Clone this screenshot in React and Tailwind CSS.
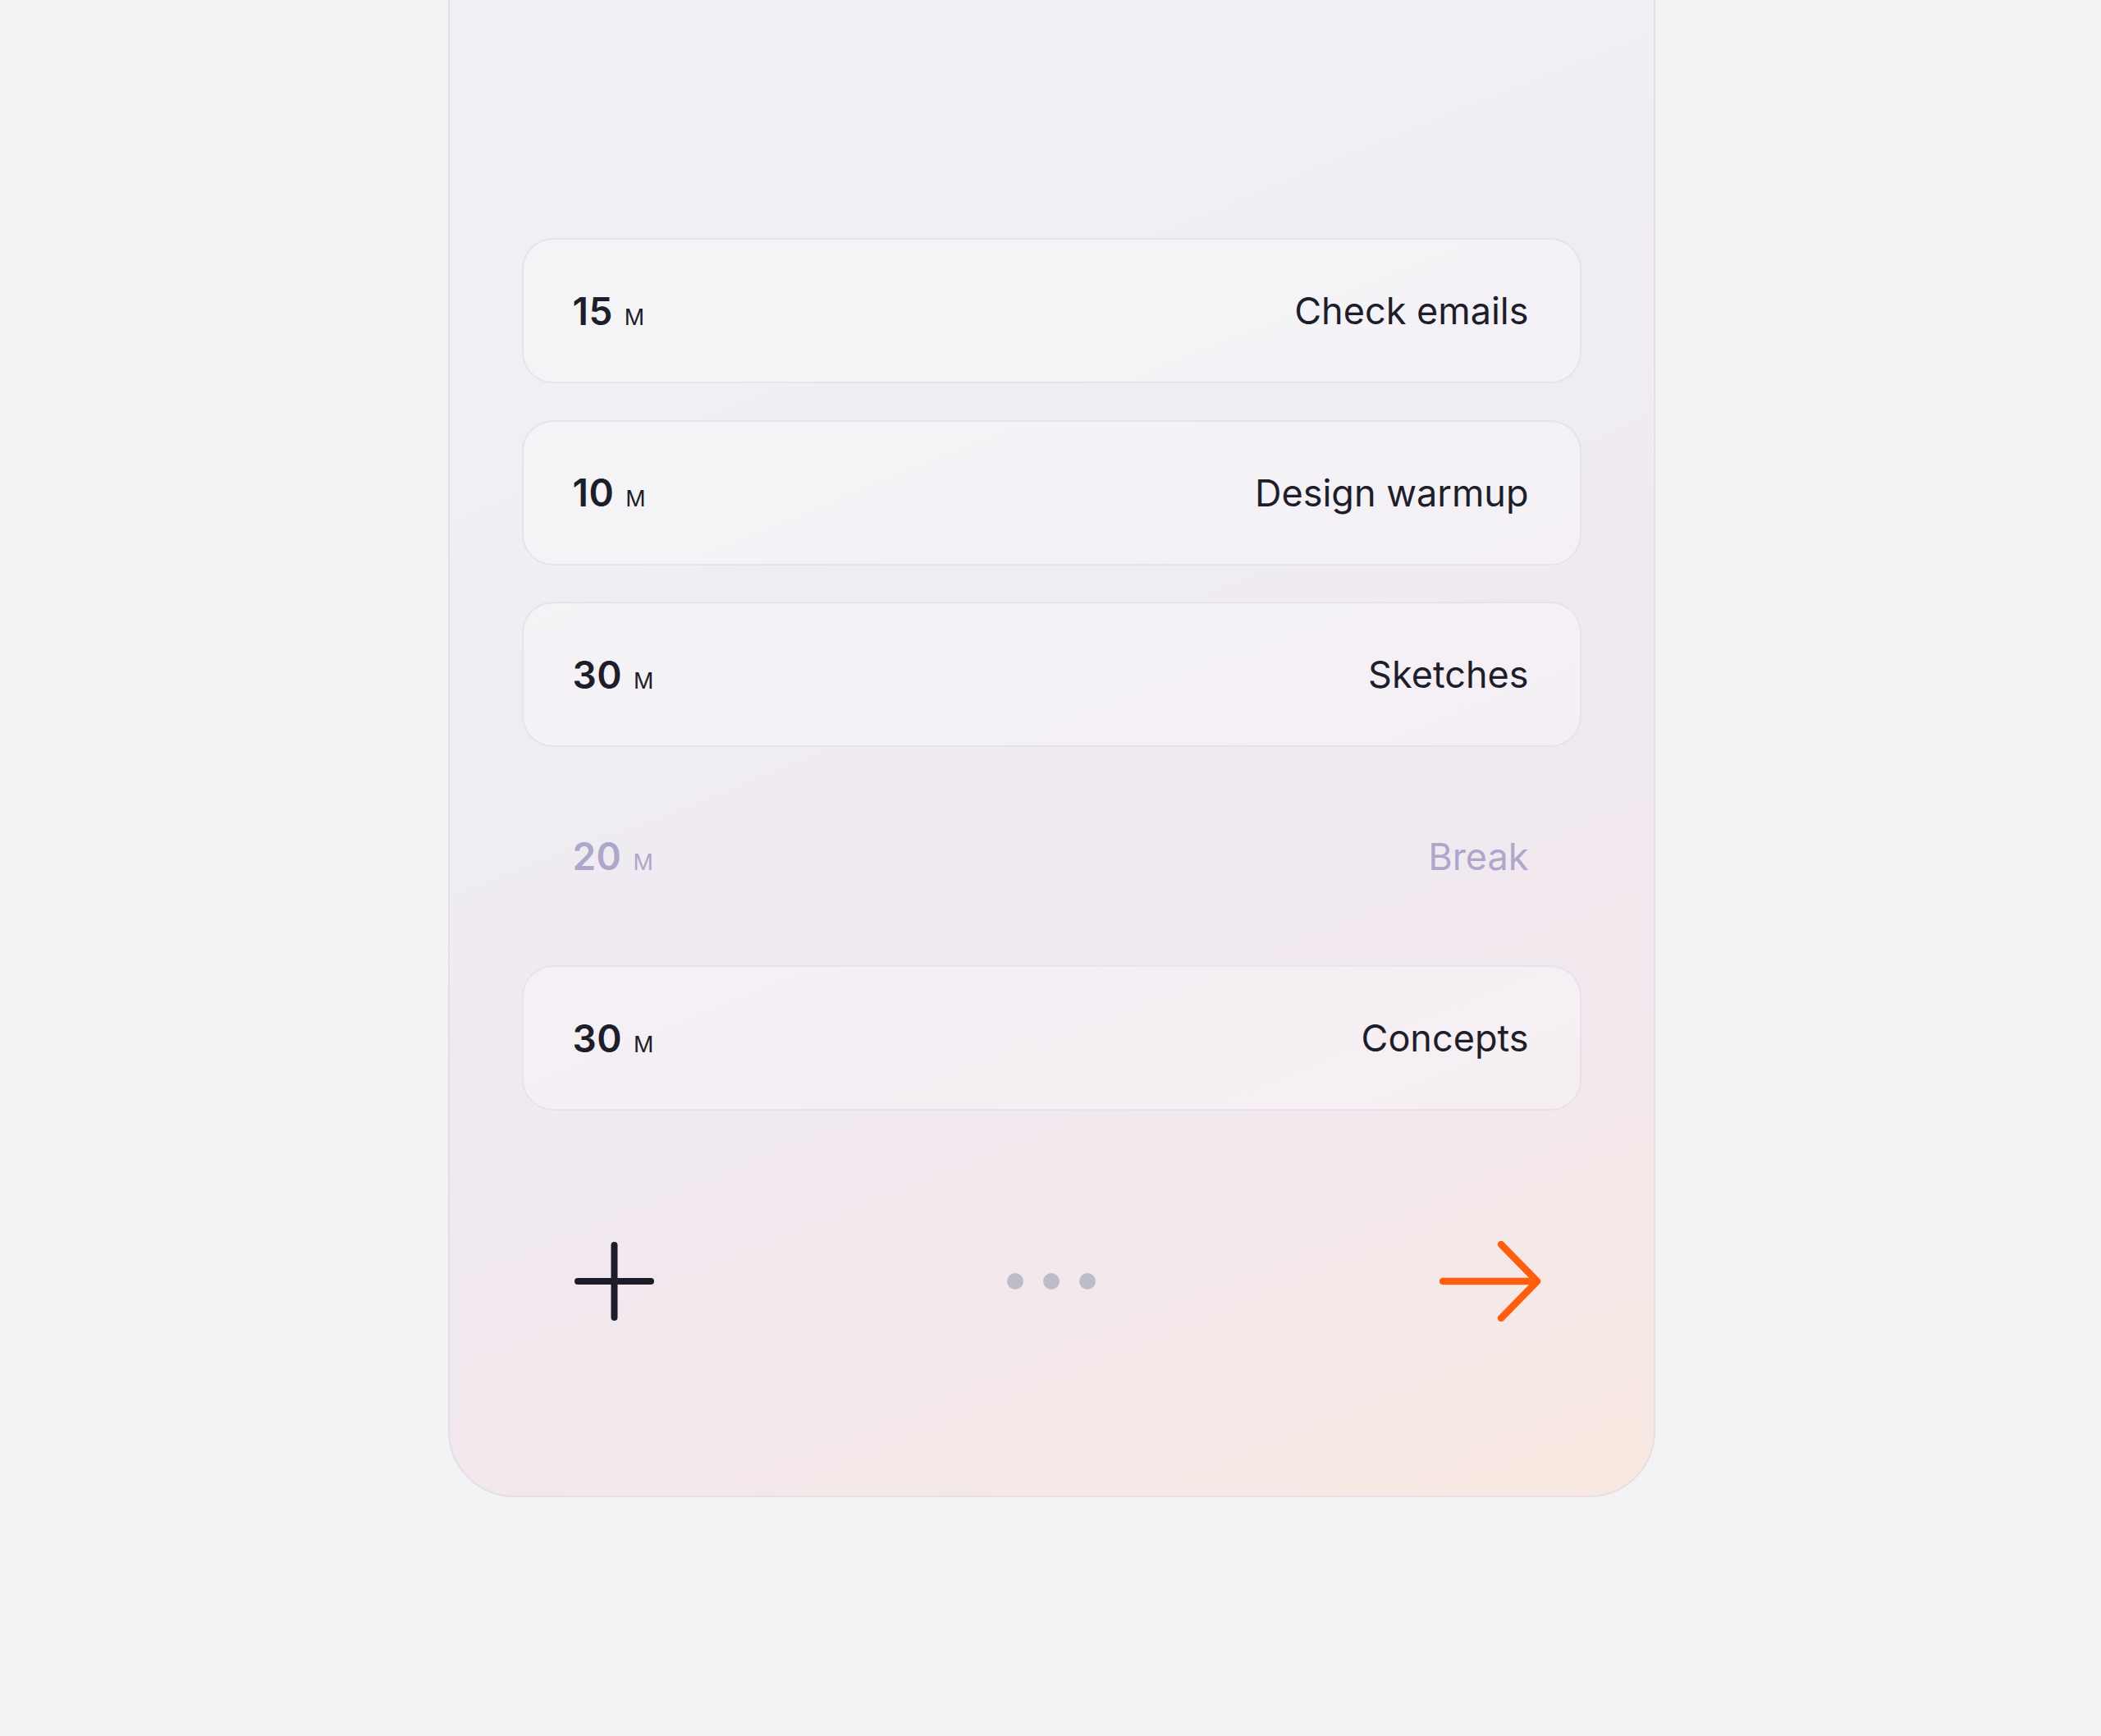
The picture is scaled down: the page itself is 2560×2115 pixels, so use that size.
import React from "react";

const rows = [
  { n: "15", label: "Check emails" },
  { n: "10", label: "Design warmup" },
  { n: "30", label: "Sketches" },
  { n: "20", label: "Break", muted: true },
  { n: "30", label: "Concepts" },
];

function Row({ n, label, muted }) {
  return (
    <div
      className={
        "flex h-[177px] items-center justify-between rounded-[38px] pl-[60px] pr-[62px] " +
        (muted ? "border-2 border-transparent" : "border-2 border-[#e5e3eb] bg-white/30")
      }
    >
      <div className={"flex items-baseline gap-[14px] " + (muted ? "text-[#aea7cb]" : "text-[#1e1e2a]")}>
        <span className="text-[46px] font-semibold leading-none tracking-[0.01em]">{n}</span>
        <span className="text-[27px] font-normal leading-none">M</span>
      </div>
      <span className={"text-[45px] font-normal leading-none " + (muted ? "text-[#aea7cb]" : "text-[#1e1e2a]")}>
        {label}
      </span>
    </div>
  );
}

export default function App() {
  return (
    <div
      className="min-h-[2115px] w-full overflow-hidden bg-[#f3f3f5]"
      style={{ fontFamily: "Inter, 'Noto Sans', sans-serif" }}
    >
      <div className="mx-auto -mt-[120px] w-[1471px] translate-x-[1px] rounded-[80px] border-2 border-[#e3dfe4] bg-[linear-gradient(158deg,#f0f1f4_0%,#eff0f4_25%,#efeaf1_55%,#f2e8ee_75%,#f8e8e0_100%)] px-[88px] pt-[408px] pb-[212px]">
        <div className="flex flex-col gap-[44.5px]">
          {rows.map((r, i) => (
            <Row key={i} {...r} />
          ))}
        </div>
        <div className="mt-[159px] grid grid-cols-[1fr_auto_1fr] items-center">
          <div className="ml-[64px] flex justify-start">
            <svg width="97" height="96" viewBox="0 0 97 96" fill="none">
              <path d="M48.5 4V92M4 48H93" stroke="#1d1d29" strokeWidth="8" strokeLinecap="round" />
            </svg>
          </div>
          <div className="flex items-center gap-[24px]">
            <span className="block h-[20px] w-[20px] rounded-full bg-[#bdbdc9]" />
            <span className="block h-[20px] w-[20px] rounded-full bg-[#bdbdc9]" />
            <span className="block h-[20px] w-[20px] rounded-full bg-[#bdbdc9]" />
          </div>
          <div className="mr-[49px] flex justify-end">
            <svg width="124" height="98" viewBox="0 0 124 98" fill="none">
              <path
                d="M4 49H118M75 4L119 49L75 94"
                stroke="#ff5e0e"
                strokeWidth="8.5"
                strokeLinecap="round"
                strokeLinejoin="round"
              />
            </svg>
          </div>
        </div>
      </div>
    </div>
  );
}
